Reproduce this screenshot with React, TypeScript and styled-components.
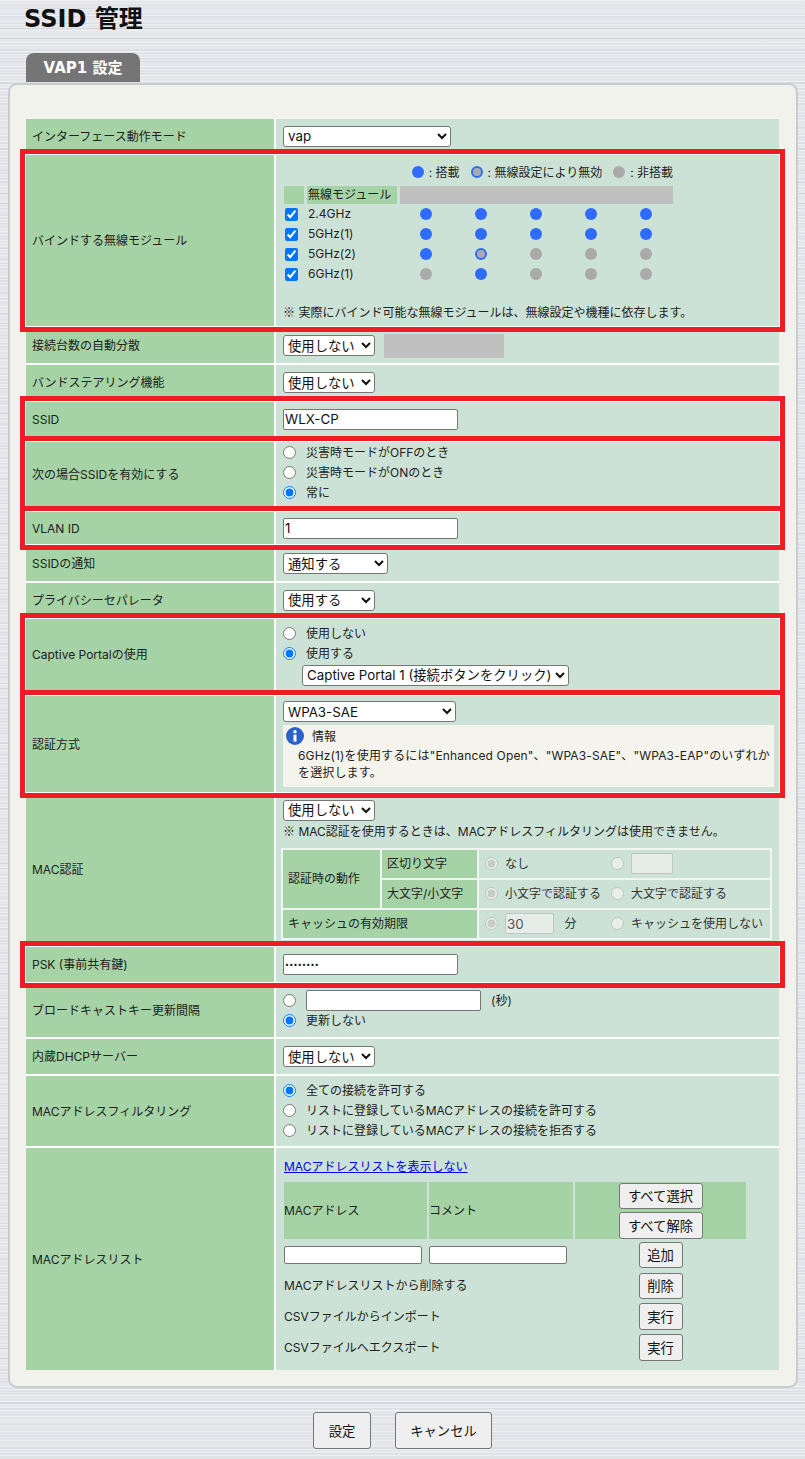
import React from 'react';
import styled, { createGlobalStyle } from 'styled-components';

const font = '"Inter", "Noto Sans CJK JP", sans-serif';
const headFont = '"DejaVu Sans", "Noto Sans CJK JP", sans-serif';

const GlobalStyle = createGlobalStyle`
  html, body {
    margin: 0;
    padding: 0;
  }
  body {
    width: 805px;
    height: 1459px;
    overflow: hidden;
    background-color: #e4e6ea;
    background-image:
      repeating-linear-gradient(0deg, rgba(255, 255, 255, 0.32) 0 1px, transparent 1px 3px),
      repeating-linear-gradient(0deg, rgba(140, 145, 160, 0.1) 0 1px, transparent 1px 5px),
      repeating-linear-gradient(0deg, rgba(140, 145, 160, 0.08) 0 2px, transparent 2px 11px);
    font-family: ${font};
    font-size: 12px;
    line-height: 17px;
    color: #222;
  }
`;

const Title = styled.h1`
  margin: 0;
  padding: 3px 0 0 24px;
  height: 53px;
  box-sizing: border-box;
  font-family: ${headFont};
  font-size: 24px;
  line-height: 33px;
  font-weight: 700;
  color: #111;
`;

const Tab = styled.div`
  margin-left: 26px;
  width: 114px;
  height: 29px;
  padding-top: 1px;
  box-sizing: border-box;
  border-radius: 8px 8px 0 0;
  background: #757575;
  color: #fff;
  font-family: ${headFont};
  font-size: 15px;
  font-weight: 700;
  line-height: 28px;
  text-align: center;
`;

const Panel = styled.div`
  margin: 1px 7px 0 8px;
  height: 1305px;
  box-sizing: border-box;
  padding: 34px 17px 0 16px;
  background: #f1f2ec;
  border: 2px solid #c9cbd0;
  border-radius: 9px;
`;

const Table = styled.div`
  display: flex;
  flex-direction: column;
  gap: 2px;
  background: #fff;
`;

const Row = styled.div<{ $h: number; $mark?: boolean; $joined?: boolean }>`
  position: relative;
  display: grid;
  grid-template-columns: 248px 1fr;
  gap: 2px;
  height: ${(p) => p.$h}px;
  margin-top: ${(p) => (p.$joined ? 4 : 0)}px;
  ${(p) =>
    p.$mark &&
    `&::after {
      content: '';
      position: absolute;
      inset: -6px;
      border: 5px solid #ee1c25;
      box-shadow: inset 0 0 0 1px #fff;
      pointer-events: none;
      z-index: 1;
    }`}
`;

const Label = styled.div`
  display: flex;
  align-items: center;
  padding-left: 6px;
  background: #a5d3a5;
`;

const Value = styled.div<{ $start?: boolean }>`
  display: flex;
  flex-direction: column;
  align-items: flex-start;
  justify-content: ${(p) => (p.$start ? 'flex-start' : 'center')};
  padding-left: 7px;
  background: #cde2d6;
`;

const Select = styled.select<{ $w: number }>`
  width: ${(p) => p.$w}px;
  height: 21px;
  box-sizing: border-box;
  margin: 0;
  padding: 0;
  font-family: ${font};
  font-size: 13.33px;
  color: #111;
  background: #fff;
  border: 1px solid #767676;
  border-radius: 3px;
`;

const IndentedSelect = styled(Select)`
  margin: 1px 0 0 19px;
`;

const TextInput = styled.input<{ $w: number; $h?: number }>`
  width: ${(p) => p.$w}px;
  height: ${(p) => p.$h ?? 21}px;
  box-sizing: border-box;
  margin: 0;
  padding: 0 1px;
  font-family: ${font};
  font-size: 13.33px;
  color: #111;
  background: #fff;
  border: 1px solid #767676;
  border-radius: 2px;

  &:disabled {
    background: #e6ede8;
    border-color: #c0c4c2;
    color: #555;
  }
`;

const PasswordInput = styled(TextInput).attrs({ type: 'password' })`
  font-size: 7px;
  letter-spacing: 0.3px;
`;

const Inline = styled.div<{ $gap: number }>`
  display: flex;
  align-items: center;
  gap: ${(p) => p.$gap}px;
`;

const GrayBox = styled.div`
  width: 120px;
  height: 24px;
  background: #c0c0c0;
`;

const Radios = styled.div<{ $up?: number }>`
  display: flex;
  flex-direction: column;
  margin-top: ${(p) => -(p.$up ?? 0)}px;
`;

const RadioLine = styled.label`
  display: flex;
  align-items: center;
  gap: 10px;
  height: 20px;
`;

const Radio = styled.input.attrs({ type: 'radio' })`
  width: 13px;
  height: 13px;
  margin: 0;
  flex: none;
`;

const Check = styled.input.attrs({ type: 'checkbox' })`
  width: 13px;
  height: 13px;
  margin: 0;
`;

/* bind row */
const Legend = styled.div`
  display: flex;
  justify-content: flex-end;
  align-items: center;
  gap: 11px;
  width: 390px;
  height: 18px;
  margin-top: 8px;
`;

const LegendItem = styled.span`
  display: flex;
  align-items: center;
  gap: 5px;
`;

const Dot = styled.span<{ $kind: 'on' | 'off' | 'na' }>`
  display: block;
  width: 12px;
  height: 12px;
  box-sizing: border-box;
  border-radius: 50%;
  background: ${(p) => (p.$kind === 'on' ? '#2f6bff' : '#aaa')};
  border: ${(p) => (p.$kind === 'off' ? '2px solid #2f6bff' : 'none')};
`;

const ModuleGrid = styled.div`
  display: grid;
  grid-template-columns: 20px 90px 273px;
  column-gap: 3px;
  margin: 5px 0 0 1px;
`;

const ModuleHead = styled.div<{ $gray?: boolean }>`
  height: 18px;
  line-height: 18px;
  padding-left: 1px;
  background: ${(p) => (p.$gray ? '#c0c0c0' : '#a5d3a5')};
`;

const ModuleCheck = styled.div`
  display: flex;
  align-items: center;
  height: 20px;
  padding-left: 1px;
`;

const ModuleName = styled.div`
  height: 20px;
  line-height: 20px;
  padding-left: 1px;
`;

const DotRow = styled.div`
  display: grid;
  grid-template-columns: repeat(5, 55px);
  justify-items: center;
  align-items: center;
  height: 20px;
  margin-left: -2px;
`;

const Note = styled.div<{ $top: number }>`
  margin-top: ${(p) => p.$top}px;
`;

const NoteMark = styled.span`
  font-family: "Noto Sans CJK JP", sans-serif;
`;

/* info box */
const InfoBox = styled.div`
  width: 491px;
  height: 62px;
  margin-top: 3px;
  box-sizing: border-box;
  padding: 2px 3px;
  background: #f4f4ec;
`;

const InfoHead = styled.div`
  display: flex;
  align-items: center;
  gap: 8px;
  height: 18px;
`;

const InfoText = styled.div`
  margin: 2px 0 0 12px;
  line-height: 17px;
  letter-spacing: 0.15px;
  white-space: nowrap;
`;

/* MAC auth table */
const AuthTable = styled.div`
  display: grid;
  grid-template-columns: 97px 95px 291px;
  grid-template-rows: 28px 28px 28px;
  gap: 2px;
  width: 491px;
  margin: 8px 0 0 -2px;
  padding: 2px;
  box-sizing: border-box;
  background: #f1f5f1;
`;

const AuthHead = styled.div<{ $tall?: boolean; $wide?: boolean }>`
  display: flex;
  align-items: center;
  padding-left: 5px;
  background: #a5d3a5;
  ${(p) => p.$tall && 'grid-row: span 2;'}
  ${(p) => p.$wide && 'grid-column: span 2;'}
`;

const AuthCell = styled.div`
  display: grid;
  grid-template-columns: 126px 1fr;
  align-items: center;
  padding-left: 6px;
  background: #cde2d6;
  color: #333;
`;

const AuthOption = styled.label`
  display: flex;
  align-items: center;
  gap: 7px;
`;

/* MAC list */
const ListLink = styled.a`
  margin: 10px 0 7px 1px;
  color: #0000ee;
  text-decoration: underline;
`;

const ListGrid = styled.div`
  display: grid;
  grid-template-columns: 143px 144px 171px;
  column-gap: 2px;
  margin-left: 1px;
  width: 462px;
`;

const ListHead = styled.div`
  display: flex;
  flex-direction: column;
  justify-content: center;
  align-items: center;
  gap: 3px;
  height: 57px;
  background: #a5d3a5;
`;

const ListHeadText = styled(ListHead)`
  align-items: flex-start;
`;

const ListRow = styled.div`
  grid-column: 1 / 3;
  display: flex;
  align-items: center;
  gap: 7px;
  height: 31px;
`;

const ListAction = styled.div`
  display: flex;
  align-items: center;
  justify-content: center;
  height: 31px;
`;

const Button = styled.button<{ $w: number; $h: number }>`
  width: ${(p) => p.$w}px;
  height: ${(p) => p.$h}px;
  padding: 0;
  box-sizing: border-box;
  font-family: ${font};
  font-size: 13.33px;
  color: #111;
  background: #efefef;
  border: 1px solid #767676;
  border-radius: 3px;
`;

const Footer = styled.div`
  display: flex;
  justify-content: flex-start;
  gap: 24px;
  padding: 24px 0 0 313px;
`;

const InfoIcon = () => (
  <svg width="18" height="18" viewBox="0 0 18 18" aria-hidden="true">
    <circle cx="9" cy="9" r="9" fill="#2a62c8" />
    <circle cx="9" cy="4.8" r="1.7" fill="#fff" />
    <rect x="7.5" y="7.6" width="3" height="7" fill="#fff" />
  </svg>
);

type DotKind = 'on' | 'off' | 'na';

const modules: { name: string; dots: DotKind[] }[] = [
  { name: '2.4GHz', dots: ['on', 'on', 'on', 'on', 'on'] },
  { name: '5GHz(1)', dots: ['on', 'on', 'on', 'on', 'on'] },
  { name: '5GHz(2)', dots: ['on', 'off', 'na', 'na', 'na'] },
  { name: '6GHz(1)', dots: ['na', 'on', 'na', 'na', 'na'] },
];

export default function App() {
  return (
    <>
      <GlobalStyle />
      <Title>SSID 管理</Title>
      <Tab>VAP1 設定</Tab>
      <Panel>
        <Table>
          <Row $h={34}>
            <Label>インターフェース動作モード</Label>
            <Value>
              <Select $w={168} defaultValue="vap">
                <option>vap</option>
              </Select>
            </Value>
          </Row>

          <Row $h={171} $mark>
            <Label>バインドする無線モジュール</Label>
            <Value $start>
              <Legend>
                <LegendItem>
                  <Dot $kind="on" />: 搭載
                </LegendItem>
                <LegendItem>
                  <Dot $kind="off" />: 無線設定により無効
                </LegendItem>
                <LegendItem>
                  <Dot $kind="na" />: 非搭載
                </LegendItem>
              </Legend>
              <ModuleGrid>
                <ModuleHead />
                <ModuleHead>無線モジュール</ModuleHead>
                <ModuleHead $gray />
                {modules.map((m) => (
                  <React.Fragment key={m.name}>
                    <ModuleCheck>
                      <Check defaultChecked />
                    </ModuleCheck>
                    <ModuleName>{m.name}</ModuleName>
                    <DotRow>
                      {m.dots.map((d, i) => (
                        <Dot key={i} $kind={d} />
                      ))}
                    </DotRow>
                  </React.Fragment>
                ))}
              </ModuleGrid>
              <Note $top={19}>
                <NoteMark>※</NoteMark> 実際にバインド可能な無線モジュールは、無線設定や機種に依存します。
              </Note>
            </Value>
          </Row>

          <Row $h={35}>
            <Label>接続台数の自動分散</Label>
            <Value>
              <Inline $gap={9}>
                <Select $w={92}>
                  <option>使用しない</option>
                </Select>
                <GrayBox />
              </Inline>
            </Value>
          </Row>

          <Row $h={35}>
            <Label>バンドステアリング機能</Label>
            <Value>
              <Select $w={92}>
                <option>使用しない</option>
              </Select>
            </Value>
          </Row>

          <Row $h={34} $mark>
            <Label>SSID</Label>
            <Value>
              <TextInput $w={175} defaultValue="WLX-CP" />
            </Value>
          </Row>

          <Row $h={64} $mark $joined>
            <Label>次の場合SSIDを有効にする</Label>
            <Value>
              <Radios $up={3}>
                <RadioLine>
                  <Radio name="emergency" />
                  災害時モードがOFFのとき
                </RadioLine>
                <RadioLine>
                  <Radio name="emergency" />
                  災害時モードがONのとき
                </RadioLine>
                <RadioLine>
                  <Radio name="emergency" defaultChecked />
                  常に
                </RadioLine>
              </Radios>
            </Value>
          </Row>

          <Row $h={32} $mark $joined>
            <Label>VLAN ID</Label>
            <Value>
              <TextInput $w={175} defaultValue="1" />
            </Value>
          </Row>

          <Row $h={35}>
            <Label>SSIDの通知</Label>
            <Value>
              <Select $w={105}>
                <option>通知する</option>
              </Select>
            </Value>
          </Row>

          <Row $h={34}>
            <Label>プライバシーセパレータ</Label>
            <Value>
              <Select $w={92}>
                <option>使用する</option>
              </Select>
            </Value>
          </Row>

          <Row $h={71} $mark>
            <Label>Captive Portalの使用</Label>
            <Value>
              <Radios>
                <RadioLine>
                  <Radio name="portal" />
                  使用しない
                </RadioLine>
                <RadioLine>
                  <Radio name="portal" defaultChecked />
                  使用する
                </RadioLine>
              </Radios>
              <IndentedSelect $w={267}>
                <option>Captive Portal 1 (接続ボタンをクリック)</option>
              </IndentedSelect>
            </Value>
          </Row>

          <Row $h={96} $mark $joined>
            <Label>認証方式</Label>
            <Value>
              <Select $w={173}>
                <option>WPA3-SAE</option>
              </Select>
              <InfoBox>
                <InfoHead>
                  <InfoIcon />
                  情報
                </InfoHead>
                <InfoText>
                  6GHz(1)を使用するには"Enhanced Open"、"WPA3-SAE"、"WPA3-EAP"のいずれか
                  <br />
                  を選択します。
                </InfoText>
              </InfoBox>
            </Value>
          </Row>

          <Row $h={151}>
            <Label>MAC認証</Label>
            <Value>
              <Select $w={92}>
                <option>使用しない</option>
              </Select>
              <Note $top={1}>
                <NoteMark>※</NoteMark> MAC認証を使用するときは、MACアドレスフィルタリングは使用できません。
              </Note>
              <AuthTable>
                <AuthHead $tall>認証時の動作</AuthHead>
                <AuthHead>区切り文字</AuthHead>
                <AuthCell>
                  <AuthOption>
                    <Radio disabled defaultChecked />
                    なし
                  </AuthOption>
                  <AuthOption>
                    <Radio disabled />
                    <TextInput $w={42} disabled />
                  </AuthOption>
                </AuthCell>
                <AuthHead>大文字/小文字</AuthHead>
                <AuthCell>
                  <AuthOption>
                    <Radio disabled defaultChecked />
                    小文字で認証する
                  </AuthOption>
                  <AuthOption>
                    <Radio disabled />
                    大文字で認証する
                  </AuthOption>
                </AuthCell>
                <AuthHead $wide>キャッシュの有効期限</AuthHead>
                <AuthCell>
                  <AuthOption>
                    <Radio disabled defaultChecked />
                    <TextInput $w={49} disabled defaultValue="30" />
                    <span>&nbsp;分</span>
                  </AuthOption>
                  <AuthOption>
                    <Radio disabled />
                    キャッシュを使用しない
                  </AuthOption>
                </AuthCell>
              </AuthTable>
            </Value>
          </Row>

          <Row $h={35} $mark>
            <Label>PSK (事前共有鍵)</Label>
            <Value>
              <PasswordInput $w={175} defaultValue="********" />
            </Value>
          </Row>

          <Row $h={53}>
            <Label>ブロードキャストキー更新間隔</Label>
            <Value>
              <Radios>
                <RadioLine>
                  <Radio name="rekey" />
                  <TextInput $w={175} />
                  (秒)
                </RadioLine>
                <RadioLine>
                  <Radio name="rekey" defaultChecked />
                  更新しない
                </RadioLine>
              </Radios>
            </Value>
          </Row>

          <Row $h={35}>
            <Label>内蔵DHCPサーバー</Label>
            <Value>
              <Select $w={92}>
                <option>使用しない</option>
              </Select>
            </Value>
          </Row>

          <Row $h={70}>
            <Label>MACアドレスフィルタリング</Label>
            <Value>
              <Radios $up={2}>
                <RadioLine>
                  <Radio name="filter" defaultChecked />
                  全ての接続を許可する
                </RadioLine>
                <RadioLine>
                  <Radio name="filter" />
                  リストに登録しているMACアドレスの接続を許可する
                </RadioLine>
                <RadioLine>
                  <Radio name="filter" />
                  リストに登録しているMACアドレスの接続を拒否する
                </RadioLine>
              </Radios>
            </Value>
          </Row>

          <Row $h={222}>
            <Label>MACアドレスリスト</Label>
            <Value $start>
              <ListLink href="#">MACアドレスリストを表示しない</ListLink>
              <ListGrid>
                <ListHeadText>MACアドレス</ListHeadText>
                <ListHeadText>コメント</ListHeadText>
                <ListHead>
                  <Button $w={84} $h={26}>すべて選択</Button>
                  <Button $w={84} $h={27}>すべて解除</Button>
                </ListHead>
                <ListRow>
                  <TextInput $w={138} $h={18} />
                  <TextInput $w={138} $h={18} />
                </ListRow>
                <ListAction>
                  <Button $w={44} $h={26}>追加</Button>
                </ListAction>
                <ListRow>MACアドレスリストから削除する</ListRow>
                <ListAction>
                  <Button $w={44} $h={26}>削除</Button>
                </ListAction>
                <ListRow>CSVファイルからインポート</ListRow>
                <ListAction>
                  <Button $w={44} $h={27}>実行</Button>
                </ListAction>
                <ListRow>CSVファイルへエクスポート</ListRow>
                <ListAction>
                  <Button $w={44} $h={27}>実行</Button>
                </ListAction>
              </ListGrid>
            </Value>
          </Row>
        </Table>
      </Panel>
      <Footer>
        <Button $w={58} $h={37}>設定</Button>
        <Button $w={97} $h={37}>キャンセル</Button>
      </Footer>
    </>
  );
}
